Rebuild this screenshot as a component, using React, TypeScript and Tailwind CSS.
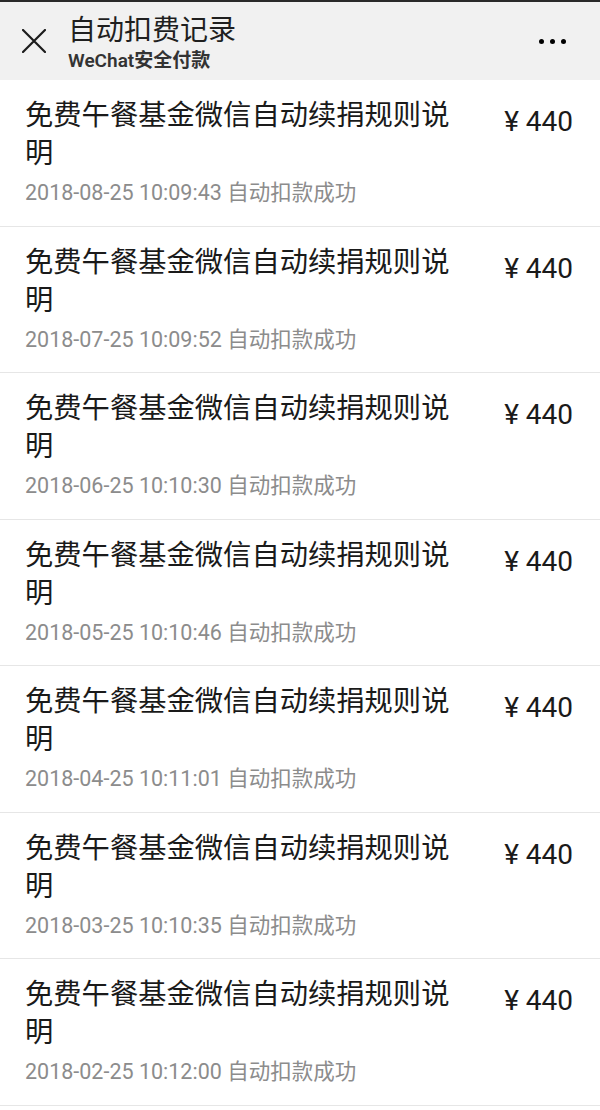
const RECORDS = [
  '2018-08-25 10:09:43',
  '2018-07-25 10:09:52',
  '2018-06-25 10:10:30',
  '2018-05-25 10:10:46',
  '2018-04-25 10:11:01',
  '2018-03-25 10:10:35',
  '2018-02-25 10:12:00',
]

const FONT = "font-['Roboto','Noto_Sans_CJK_SC',sans-serif]"

export default function App() {
  return (
    <div className={`w-[600px] h-[1110px] overflow-hidden bg-white ${FONT}`}>
      {/* Header */}
      <div className="h-[80px] bg-[#f1f1f1] border-t-2 border-[#2a2a2a] flex items-center">
        <div className="w-[68px] flex justify-center pl-[2px]">
          <svg width="24" height="24" viewBox="0 0 24 24" className="mr-[2px]">
            <path d="M1 1 L23 23 M23 1 L1 23" stroke="#1c1c1c" strokeWidth="2.2" strokeLinecap="round" />
          </svg>
        </div>
        <div className="flex-1 self-start pt-[12px]">
          <div className="text-[28px] leading-[34px] text-[#1f1f1f]">自动扣费记录</div>
          <div className="text-[19px] leading-[24px] font-semibold text-[#333] mt-[1px]">WeChat安全付款</div>
        </div>
        <div className="flex gap-[6px] pr-[34px]">
          <span className="w-[5px] h-[5px] rounded-full bg-black" />
          <span className="w-[5px] h-[5px] rounded-full bg-black" />
          <span className="w-[5px] h-[5px] rounded-full bg-black" />
        </div>
      </div>

      {/* Records */}
      {RECORDS.map((time) => (
        <div key={time} className="h-[146.5px] border-b border-[#e6e6e6] flex pl-[25px] pr-[27px] pt-[17px]">
          <div className="flex-1">
            <div className="w-[440px] text-[28.3px] leading-[38px] text-[#1a1a1a]">
              免费午餐基金微信自动续捐规则说明
            </div>
            <div className="mt-[5px] text-[21.5px] leading-[30px] text-[#8c8c8c]">
              {time} 自动扣款成功
            </div>
          </div>
          <div className="text-[28px] leading-[38px] text-[#1a1a1a] mt-[6px] whitespace-pre">¥ 440</div>
        </div>
      ))}
    </div>
  )
}
